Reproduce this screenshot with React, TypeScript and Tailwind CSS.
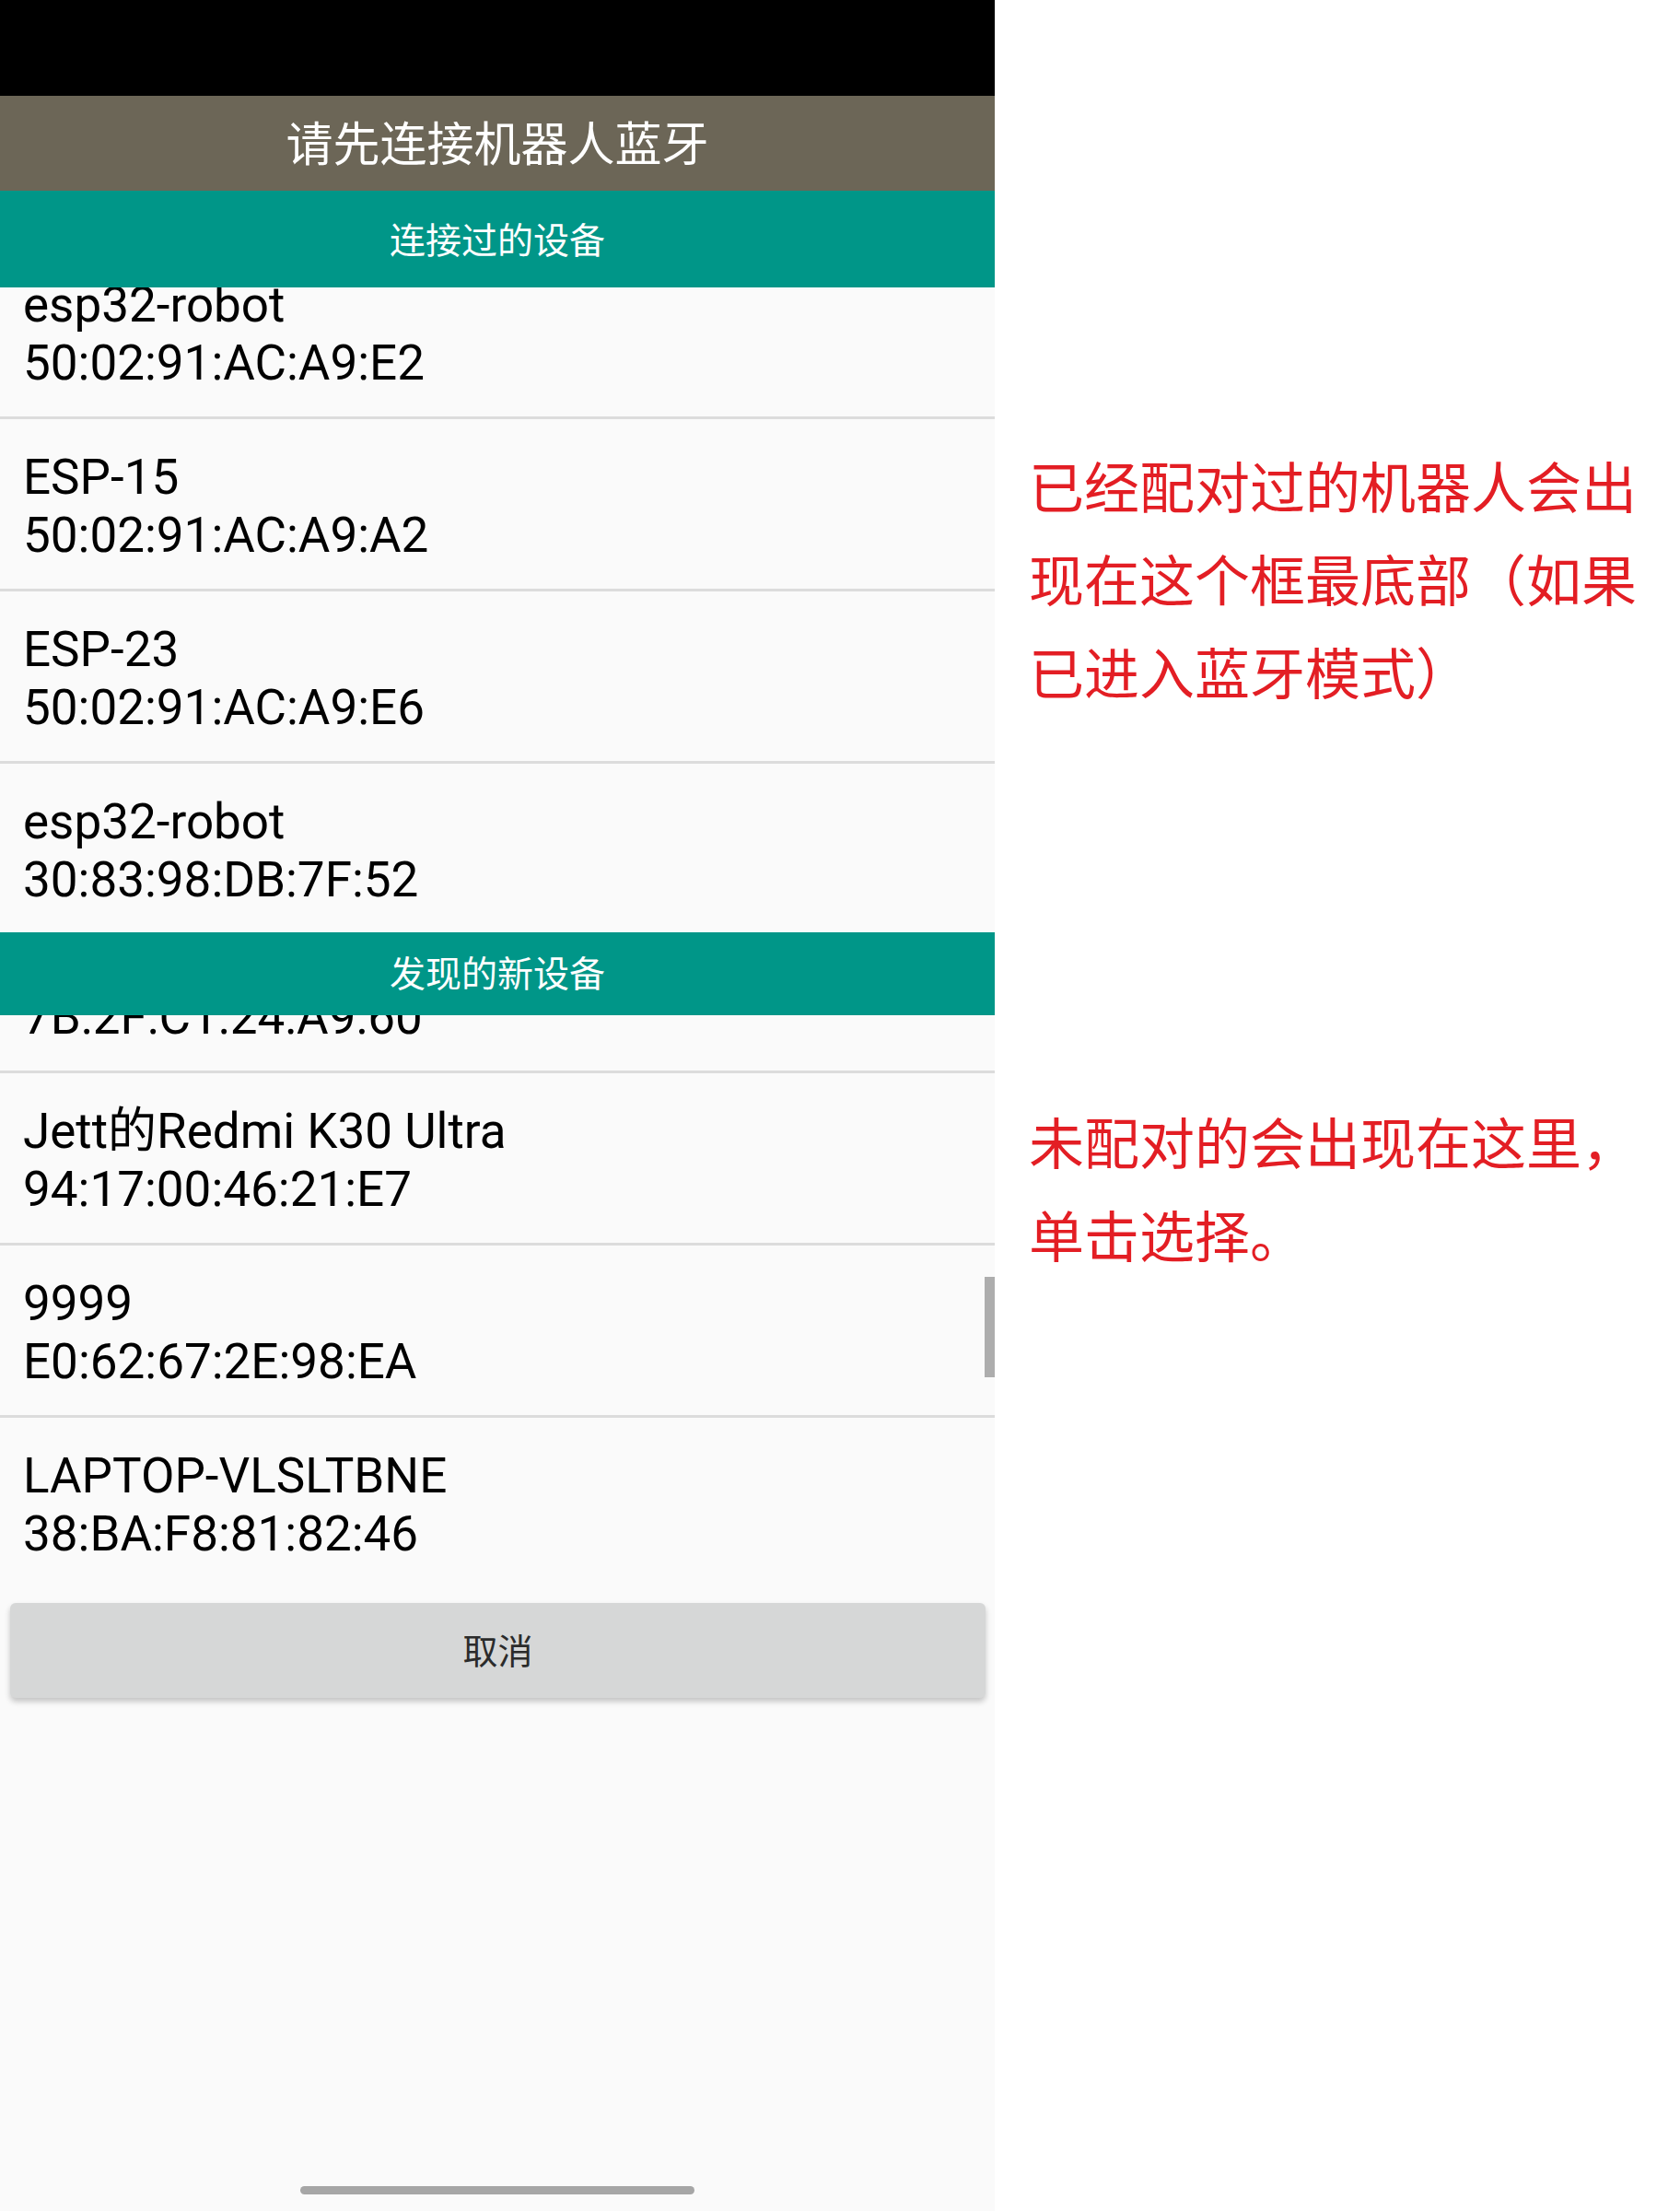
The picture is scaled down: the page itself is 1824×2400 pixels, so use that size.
import React from 'react';

type Device = {name: string; mac: string};

const paired: Device[] = [
    {name: 'esp32-robot', mac: '50:02:91:AC:A9:E2'},
    {name: 'ESP-15', mac: '50:02:91:AC:A9:A2'},
    {name: 'ESP-23', mac: '50:02:91:AC:A9:E6'},
    {name: 'esp32-robot', mac: '30:83:98:DB:7F:52'},
];

const found: Device[] = [
    {name: 'ESP32test', mac: '7B:2F:C1:24:A9:60'},
    {name: 'Jett的Redmi K30 Ultra', mac: '94:17:00:46:21:E7'},
    {name: '9999', mac: 'E0:62:67:2E:98:EA'},
    {name: 'LAPTOP-VLSLTBNE', mac: '38:BA:F8:81:82:46'},
];

function DeviceRow({device}: {device: Device}) {
    return (
        <div className="border-b-[3px] border-[#dcdcdc] pb-[26px] pl-[25px] pt-[32px] text-[53px] leading-[63px] text-black">
            <div className="whitespace-nowrap">{device.name}</div>
            <div className="whitespace-nowrap">{device.mac}</div>
        </div>
    );
}

function SectionHeader({title, tall}: {title: string; tall?: boolean}) {
    return (
        <div
            className={
                tall
                    ? 'flex h-[105px] items-center justify-center bg-[#009688] pt-[5px] text-[39px] text-white'
                    : 'flex h-[90px] items-center justify-center bg-[#009688] pt-[3px] text-[39px] text-white'
            }
        >
            {title}
        </div>
    );
}

export default function App() {
    return (
        <div
            className="flex w-[1824px] bg-white"
            style={{fontFamily: 'Roboto, "Noto Sans CJK SC", sans-serif'}}
        >
            {/* phone screen */}
            <div className="flex h-[2400px] w-[1080px] flex-col bg-[#fafafa]">
                <div className="h-[104px] bg-black" />
                <div className="flex h-[103px] items-center justify-center bg-[#6c6657] pt-[5px] text-[51px] text-white">
                    请先连接机器人蓝牙
                </div>

                <SectionHeader title="连接过的设备" tall />
                <div className="h-[700px] overflow-hidden">
                    <div className="mt-[-44px]">
                        {paired.map((d, i) => (
                            <DeviceRow key={i} device={d} />
                        ))}
                    </div>
                </div>

                <SectionHeader title="发现的新设备" />
                <div className="relative h-[621px] overflow-hidden">
                    <div className="mt-[-124px]">
                        {found.map((d, i) => (
                            <DeviceRow key={i} device={d} />
                        ))}
                    </div>
                    {/* scrollbar thumb */}
                    <div className="absolute right-0 top-[284px] h-[109px] w-[11px] bg-[#adadad]" />
                </div>

                <button className="ml-[11px] mr-[10px] mt-[17px] h-[103px] rounded-[6px] bg-[#d6d7d7] pt-[3px] text-[38px] text-[#2b2b2b] shadow-[0_4px_6px_rgba(0,0,0,0.22)]">
                    取消
                </button>

                <div className="mt-auto flex justify-center pb-[18px]">
                    <div className="h-[9px] w-[428px] rounded-full bg-[#a6a6a6]" />
                </div>
            </div>

            {/* annotations */}
            <div
                className="w-[744px] pl-[37px] pt-[475px] text-[60px] leading-[101px] text-[#e31e24]"
                style={{fontFamily: '"Noto Sans CJK SC", sans-serif'}}
            >
                <p>已经配对过的机器人会出现在这个框最底部（如果已进入蓝牙模式）</p>
                <p className="mt-[409px]">未配对的会出现在这里，单击选择。</p>
            </div>
        </div>
    );
}
